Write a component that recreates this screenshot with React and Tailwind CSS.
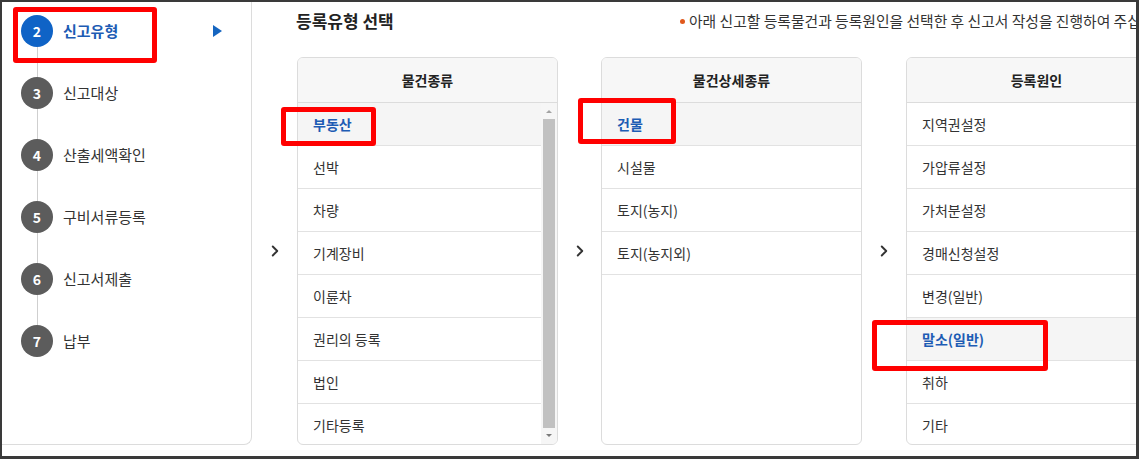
import { ChevronRight } from 'lucide-react';

const FONT = { fontFamily: '"Noto Sans CJK KR", "Noto Sans", sans-serif' };

const steps = [
    { no: 2, label: '신고유형', active: true },
    { no: 3, label: '신고대상' },
    { no: 4, label: '산출세액확인' },
    { no: 5, label: '구비서류등록' },
    { no: 6, label: '신고서제출' },
    { no: 7, label: '납부' },
];

const columns = [
    {
        title: '물건종류',
        items: ['부동산', '선박', '차량', '기계장비', '이륜차', '권리의 등록', '법인', '기타등록'],
        selected: 0,
        scroll: true,
    },
    {
        title: '물건상세종류',
        items: ['건물', '시설물', '토지(농지)', '토지(농지외)'],
        selected: 0,
    },
    {
        title: '등록원인',
        items: ['지역권설정', '가압류설정', '가처분설정', '경매신청설정', '변경(일반)', '말소(일반)', '취하', '기타'],
        selected: 5,
    },
];

// Scrollbar like the old windows one
const ScrollBar = () => (
    <div className="w-[16px] shrink-0 bg-[#f6f6f6] flex flex-col items-center">
        <svg width="8" height="16" viewBox="0 0 8 16" className="shrink-0">
            <path d="M1 10 L4 7 L7 10 Z" fill="#a3a3a3" />
        </svg>
        <div className="w-[12px] flex-1 bg-[#c1c1c1]" />
        <svg width="8" height="16" viewBox="0 0 8 16" className="shrink-0">
            <path d="M1 6 L4 9 L7 6 Z" fill="#7a7a7a" />
        </svg>
    </div>
);

const SelectColumn = ({ title, items, selected, scroll }) => (
    <div className="w-[261px] h-[388px] shrink-0 border border-[#dcdcdc] rounded-md overflow-hidden flex flex-col bg-white">
        <div className="h-[45px] shrink-0 bg-[#f7f7f7] border-b border-[#dcdcdc] flex items-center justify-center text-[14px] font-bold text-[#222]">
            {title}
        </div>
        <div className="flex flex-1 min-h-0">
            <ul className="flex-1 min-w-0">
                {items.map((item, i) => (
                    <li
                        key={item}
                        className={`h-[43px] border-b border-[#e2e2e2] flex items-center pl-[15px] text-[14px] ${i === selected
                            ? 'bg-[#f5f5f5] text-[#1d5cb4] font-bold'
                            : 'text-[#333]'
                            }`}
                    >
                        {item}
                    </li>
                ))}
            </ul>
            {scroll && <ScrollBar />}
        </div>
    </div>
);

const Arrow = ({ w = 'w-[43px]' }) => (
    <div className={`${w} shrink-0 flex justify-center`}>
        <ChevronRight className="w-[18px] h-[18px] text-[#333]" strokeWidth={2.5} />
    </div>
);

export default function App() {
    return (
        <div
            className="relative w-[1139px] h-[459px] bg-white border-t-2 border-l-2 border-r-[3px] border-b-[3px] border-[#3a3a3a] overflow-hidden flex"
            style={FONT}
        >
            {/* Step sidebar */}
            <div className="w-[250px] h-[443px] shrink-0 border-r border-b border-[#dcdcdc] rounded-br-lg">
                <ul className="relative -mt-0.5">
                    <div className="absolute left-[35px] top-[31px] h-[310px] w-px bg-[#cfcfcf]" />
                    {steps.map((s) => (
                        <li key={s.no} className="relative h-[62px] flex items-center pl-[19px] pr-[29px]">
                            <span
                                className={`w-[32px] h-[32px] rounded-full flex items-center justify-center text-white text-[14px] font-bold ${s.active ? 'bg-[#0f63c6]' : 'bg-[#5c5c5c]'
                                    }`}
                            >
                                {s.no}
                            </span>
                            <span
                                className={`ml-[10px] text-[15px] ${s.active ? 'font-bold text-[#1d5cb4]' : 'text-[#333]'}`}
                            >
                                {s.label}
                            </span>
                            {s.active && (
                                <svg width="9" height="12" viewBox="0 0 9 12" className="ml-auto">
                                    <path d="M0 0 L9 6 L0 12 Z" fill="#1565c0" />
                                </svg>
                            )}
                        </li>
                    ))}
                </ul>
            </div>

            {/* Main */}
            <div className="flex-1 min-w-0 overflow-hidden pt-[6px]">
                <div className="flex items-center h-[26px] whitespace-nowrap pl-[44px]">
                    <h2 className="w-[384px] shrink-0 text-[17px] font-bold text-[#222]">등록유형 선택</h2>
                    <span className="w-[5px] h-[5px] rounded-full bg-[#e0581c] shrink-0" />
                    <p className="ml-[4px] text-[14.8px] text-[#333]">
                        아래 신고할 등록물건과 등록원인을 선택한 후 신고서 작성을 진행하여 주십시오.
                    </p>
                </div>

                <div className="mt-[23px] flex items-center">
                    <Arrow w="w-[45px]" />
                    <SelectColumn {...columns[0]} />
                    <Arrow />
                    <SelectColumn {...columns[1]} />
                    <Arrow w="w-[44px]" />
                    <SelectColumn {...columns[2]} />
                </div>
            </div>

            {/* Red annotation boxes */}
            <div className="absolute left-[11px] top-[5px] w-[144px] h-[56px] border-[5px] border-[#ff0000] rounded-[3px]" />
            <div className="absolute left-[279px] top-[105px] w-[95px] h-[39px] border-[5px] border-[#ff0000] rounded-[3px]" />
            <div className="absolute left-[576px] top-[96px] w-[98px] h-[46px] border-[5px] border-[#ff0000] rounded-[3px]" />
            <div className="absolute left-[870px] top-[318px] w-[176px] h-[51px] border-[5px] border-[#ff0000] rounded-[3px]" />
        </div>
    );
}
